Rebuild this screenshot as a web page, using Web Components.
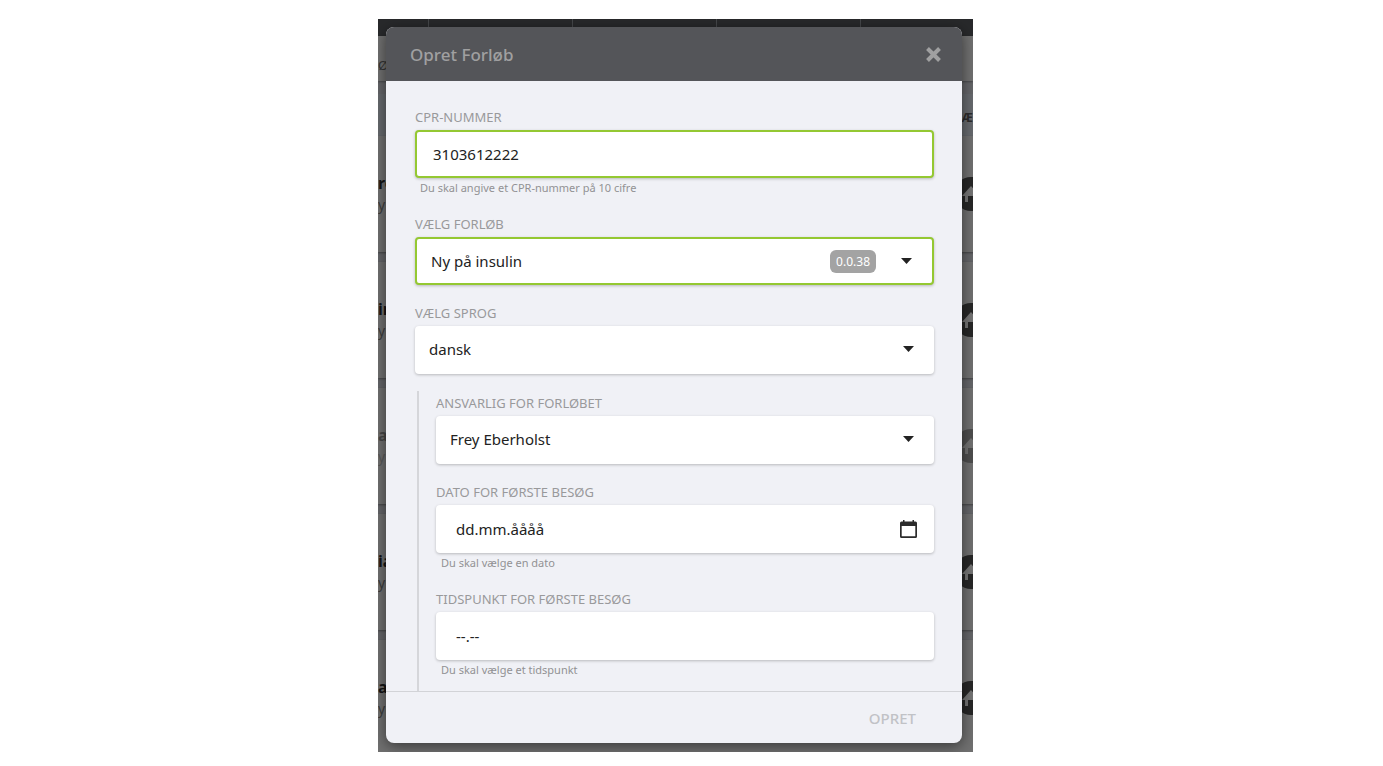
<!DOCTYPE html>
<html lang="da">
<head>
<meta charset="utf-8">
<title>Opret Forløb</title>
<style>
  body{
    margin: 0;
    background: #fff;
    font-family: "Noto Sans", "Open Sans", sans-serif;
    font-size: 15px;
    color: #222;
  }
</style>
</head>
<body>
<journey-page></journey-page>

<script>
function define(name, html, setup){
  const template = document.createElement("template")
  template.innerHTML = html

  customElements.define(name, class extends HTMLElement {
    constructor() {
      super();
      this.attachShadow({ mode: 'open' });
      this.shadowRoot.appendChild(template.content.cloneNode(true));
    }

    connectedCallback() {
      setup?.(this, this.shadowRoot)
    }
  })
}

// One row of the patient list behind the dialog
define("patient-row", `
  <style>
    :host{
      display: flex;
      align-items: center;
      justify-content: space-between;
      background: #707070;
      box-shadow: 0 1px 2px rgba(0,0,0,.35);
      line-height: 22px;
    }
    :host([inactive]) .text, :host([inactive]) svg{opacity: .45;}
    .name{font-weight: bold; font-size: 16px; color: #141414;}
    .type{font-size: 14px; color: #3c3c3c;}
    svg{width: 34px; height: 34px; flex: none;}
  </style>
  <div class="text">
    <div class="name"><slot name="name"></slot></div>
    <div class="type"><slot></slot></div>
  </div>
  <svg viewBox="0 0 34 34" aria-hidden="true">
    <circle cx="17" cy="17" r="17" fill="#272727"/>
    <path d="M17 9 L8 19 H11 V25 H14 V19 H19 V25 H23 V19 H26 Z" fill="#747474"/>
  </svg>
`)

define("patient-list", `
  <style>
    :host{display: flex; flex-direction: column; overflow: hidden; background: #646568;}
    nav{
      display: grid;
      grid-template-columns: 50px repeat(3, 143px) 1fr;
      gap: 1px;
      height: 17px;
      background: #45474a;
    }
    nav span{background: #28292b;}
    .filter{
      height: 45px;
      line-height: 58px;
      font-size: 13px;
      color: #333;
      background: #707070;
      box-shadow: 0 1px 2px rgba(0,0,0,.3);
    }
    .columns{
      margin-top: 13px;
      height: 42px;
      line-height: 48px;
      text-align: right;
      font-size: 12px;
      font-weight: bold;
      color: #2c2c2c;
      background: #66696d;
    }
    .rows{
      flex: 1;
      display: grid;
      grid-auto-rows: 1fr;
      gap: 10px;
      margin: 0 -15px -4px 0;
    }
  </style>
  <nav><span></span><span></span><span></span><span></span><span></span></nav>
  <div class="filter">ØB</div>
  <div class="columns">Æ</div>
  <div class="rows">
    <patient-row><span slot="name">re</span>y</patient-row>
    <patient-row><span slot="name">in</span>y</patient-row>
    <patient-row inactive><span slot="name">a</span>y</patient-row>
    <patient-row><span slot="name">ia</span>y</patient-row>
    <patient-row><span slot="name">a</span>yp</patient-row>
  </div>
`)

define("modal-dialog", `
  <style>
    :host{
      display: flex;
      flex-direction: column;
      overflow: hidden;
      border-radius: 8px;
      background: #f0f1f6;
      box-shadow: 0 3px 14px rgba(0,0,0,.5);
    }
    header{
      display: flex;
      align-items: center;
      justify-content: space-between;
      height: 54px;
      padding: 0 20px 0 24px;
      background: #545559;
      color: #a0a0a1;
    }
    h1{margin: 0; font-size: 17px; font-weight: 500;}
    button{border: 0; padding: 0; background: none; font: inherit; color: inherit; cursor: pointer;}
    svg{display: block; width: 17px; height: 17px;}
    .body{
      flex: 1;
      min-height: 0;
      overflow: hidden;
      display: flex;
      flex-direction: column;
      gap: 20px;
      padding: 28px 28px 0 29px;
    }
    footer{
      display: flex;
      align-items: center;
      justify-content: flex-end;
      height: 51px;
      padding: 0 46px;
      border-top: 1px solid #d2d3d7;
      color: #c1c2c6;
    }
    footer button{font-weight: 500;}
    button:disabled{color: inherit; cursor: default;}
  </style>
  <header>
    <h1></h1>
    <button type="button" aria-label="Luk">
      <svg viewBox="0 0 17 17" fill="none" stroke="currentColor" stroke-width="4"><path d="M2.500 2.500 L14.500 14.500 M14.500 2.500 L2.500 14.500"/></svg>
    </button>
  </header>
  <div class="body"><slot></slot></div>
  <footer><button type="button" id="submit" disabled></button></footer>
`, (el, root) => {
  root.querySelector("h1").textContent = el.getAttribute("heading")
  root.getElementById("submit").textContent = el.getAttribute("action")
})

// Shared by all the fields
const fieldStyle = `
    :host{display: block;}
    label{display: block; font-size: 13px; line-height: 16px; margin-bottom: 5px; color: #99999b; text-transform: uppercase;}
    .box{
      display: grid;
      align-items: center;
      height: 48px;
      box-sizing: border-box;
      border-radius: 4px;
      background: #fff;
      box-shadow: 0 1px 3px rgba(0,0,0,.24);
    }
    .box > *{grid-area: 1 / 1;}
    :host([valid]) .box{border: 2px solid #94c832;}
    input, select{
      width: 100%;
      height: 100%;
      box-sizing: border-box;
      border: 0;
      outline: 0;
      border-radius: 4px;
      background: none;
      appearance: none;
      font: inherit;
      color: #222;
    }
    .end{display: flex; align-items: center; justify-self: end;}
    svg{display: block;}
`

define("text-field", `
  <style>
    ${fieldStyle}
    input{padding: 0 16px;}
    :host(:not([valid])) input{padding: 0 20px;}
    input::placeholder{color: #222; opacity: 1;}
    .hint{margin: 2px 5px 0; font-size: 11px; line-height: 16px; color: #929294;}
    .end{margin-right: 17px;}
    .end button{border: 0; padding: 0; background: none; cursor: pointer;}
    :host(:not([calendar])) .end{display: none;}
  </style>
  <label for="field"></label>
  <div class="box">
    <input id="field" type="text" aria-describedby="hint">
    <div class="end">
      <button type="button" aria-label="Vælg dato">
        <svg width="17" height="18" viewBox="0 0 17 18">
          <path d="M3 0h1.500v1.500h8V0H14v1.500h1.500q1.500 0 1.500 1.500v13.500q0 1.500-1.500 1.500h-14q-1.500 0-1.500-1.500V3Q0 1.500 1.500 1.500H3z M1.700 6v10.300h13.600V6z" fill="#2b2b2b" fill-rule="evenodd"/>
        </svg>
      </button>
    </div>
  </div>
  <div class="hint" id="hint"></div>
`, (el, root) => {
  root.querySelector("label").textContent = el.getAttribute("label")
  root.getElementById("hint").textContent = el.getAttribute("hint")
  root.getElementById("field").value = el.getAttribute("value") || ""
  root.getElementById("field").placeholder = el.getAttribute("placeholder") || ""
})

define("select-field", `
  <style>
    ${fieldStyle}
    select{padding: 0 14px;}
    :host(:not([valid])) .box{padding-bottom: 3px;}
    .end{gap: 25px; margin-right: 20px; pointer-events: none;}
    ::slotted(*){
      padding: 0 6px;
      border-radius: 6px;
      background: #a3a3a3;
      color: #fff;
      font-size: 12px;
      line-height: 23px;
    }
  </style>
  <label for="field"></label>
  <div class="box">
    <select id="field"></select>
    <div class="end">
      <slot></slot>
      <svg width="11" height="6" viewBox="0 0 11 6" aria-hidden="true"><path d="M0 0h11L5.500 6z" fill="#222"/></svg>
    </div>
  </div>
`, (el, root) => {
  root.querySelector("label").textContent = el.getAttribute("label")
  root.getElementById("field").replaceChildren(new Option(el.getAttribute("value")))
})

define("field-group", `
  <style>
    :host{
      flex: 1;
      display: flex;
      flex-direction: column;
      gap: 20px;
      margin: -3px 0 0 2px;
      padding: 4px 0 0 17px;
      border-left: 2px solid #d5d6da;
    }
  </style>
  <slot></slot>
`)

define("journey-page", `
  <style>
    :host{
      display: grid;
      grid-template-columns: 378fr 595fr 410fr;
      grid-template-rows: 19fr 733fr 14fr;
      height: 100vh;
    }
    main{
      grid-area: 2 / 2;
      position: relative;
      display: grid;
      min-width: 0;
      min-height: 0;
      overflow: hidden;
    }
    patient-list{min-width: 0; min-height: 0;}
    modal-dialog{position: absolute; inset: 8px 11px 9px 8px;}
  </style>
  <main>
    <patient-list></patient-list>
    <modal-dialog role="dialog" aria-label="Opret Forløb" heading="Opret Forløb" action="OPRET">
      <text-field valid label="CPR-nummer" value="3103612222" hint="Du skal angive et CPR-nummer på 10 cifre"></text-field>
      <select-field valid label="Vælg forløb" value="Ny på insulin"><span>0.0.38</span></select-field>
      <select-field label="Vælg sprog" value="dansk"></select-field>
      <field-group>
        <select-field label="Ansvarlig for forløbet" value="Frey Eberholst"></select-field>
        <text-field calendar label="Dato for første besøg" placeholder="dd.mm.åååå" hint="Du skal vælge en dato"></text-field>
        <text-field label="Tidspunkt for første besøg" placeholder="--.--" hint="Du skal vælge et tidspunkt"></text-field>
      </field-group>
    </modal-dialog>
  </main>
`)
</script>
</body>
</html>
